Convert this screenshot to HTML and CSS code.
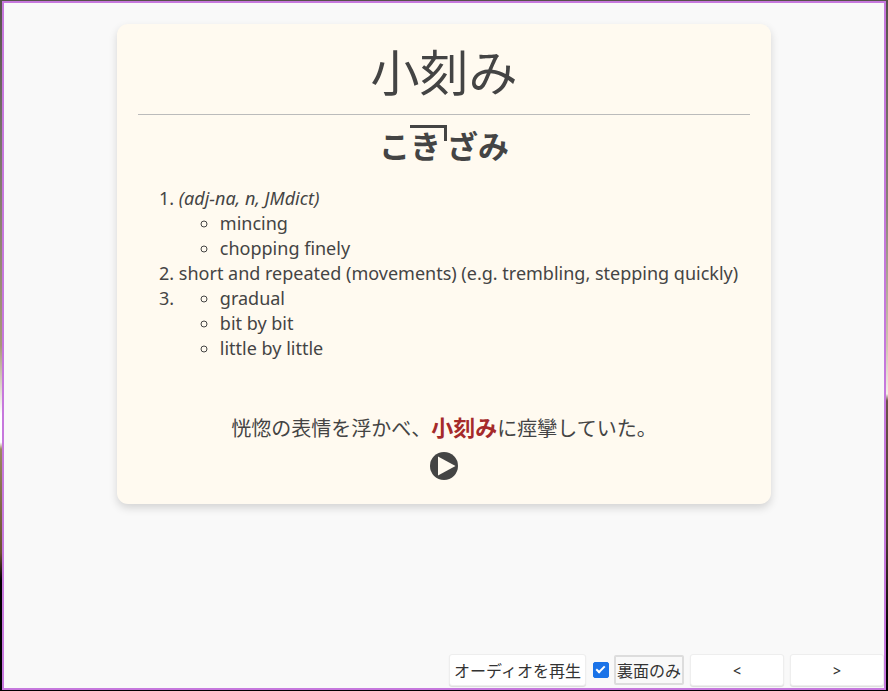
FILE: index.html
```html
<!DOCTYPE html>
<html lang="ja">
<head>
<meta charset="utf-8">
<title>小刻み</title>
<link rel="stylesheet" href="styles.css">
</head>
<body>
<div class="window">
  <main class="card">
    <h1 class="word">小刻み</h1>
    <hr class="rule">
    <p class="reading">こ<span class="high">き</span>ざみ</p>
    <ol class="senses" lang="en">
      <li><i>(adj-na, n, JMdict)</i>
        <ul><li>mincing</li><li>chopping finely</li></ul>
      </li>
      <li>short and repeated (movements) (e.g. trembling, stepping quickly)</li>
      <li>
        <ul><li>gradual</li><li>bit by bit</li><li>little by little</li></ul>
      </li>
    </ol>
    <p class="sentence">恍惚の表情を浮かべ、<b>小刻み</b>に痙攣していた。</p>
    <button class="play" type="button" aria-label="再生">
      <svg viewBox="0 0 28 28" width="28" height="28"><circle cx="14" cy="14" r="14"/><path d="M8 4.500v19L25.500 14z"/></svg>
    </button>
  </main>
  <footer class="bar">
    <button class="btn audio" type="button">オーディオを再生</button>
    <input class="check" type="checkbox" id="back" checked>
    <label class="check-label" for="back">裏面のみ</label>
    <button class="btn nav" type="button">&lt;</button>
    <button class="btn nav" type="button">&gt;</button>
  </footer>
</div>
</body>
</html>
```
FILE: styles.css
```css
*, *::before, *::after { box-sizing: border-box; }

body {
  margin: 0;
  min-height: 100vh;
  display: flex;
  padding: 1px 2px;
  background:
    linear-gradient(#55514a, #77736a 20%, #a89878 50%, #fff 60%, #fff 64%, #9a8860 65%, #6a5030 80%, #000 84%) left / 2px 100% no-repeat,
    linear-gradient(#55514a, #8a8078 30%, #d0c4b0 50%, #f4eee6 57%, #6a5248 58%, #4a3830 78%, #000 92%) right / 2px 100% no-repeat,
    linear-gradient(#55514a 50%, #000 50%);
  color: #444;
  font: 18px/25px "Noto Sans", "Noto Sans CJK JP", sans-serif;
}

.window {
  flex: 1;
  display: flex;
  flex-direction: column;
  align-items: center;
  border: 2px solid #c678dd;
  background: #f9f9f9;
}

.card {
  display: flex;
  flex-direction: column;
  margin-top: 21px;
  padding: 16px 21px 24px;
  border-radius: 11px;
  background: #fffaf0;
  box-shadow: 0 4px 8px rgba(0, 0, 0, 0.15);
}

.word {
  margin: 0;
  font: 400 49px/60px "Noto Sans CJK JP", sans-serif;
  text-align: center;
}

.rule {
  width: 100%;
  margin: 14px 0 9px;
  border: 0;
  border-top: 1px solid #bbb;
}

.reading {
  margin: 0 0 20px;
  font: 700 31px/42px "Noto Sans CJK JP", sans-serif;
  text-align: center;
}

.high {
  position: relative;
  margin-right: 6px;
}

.high::after {
  content: "";
  position: absolute;
  inset: 3px -6px auto 0;
  height: 16px;
  border: solid #444;
  border-width: 3px 3px 0 0;
}

.senses {
  margin: 0;
  padding: 0 12px 0 41px;
}

.senses ul {
  margin: 0;
  padding-left: 41px;
  list-style: circle;
}

.sentence {
  margin: 50px 0 9px;
  font: 20px/30px "Noto Sans CJK JP", sans-serif;
  text-align: center;
}

.sentence b {
  color: #a52a2a;
  font-size: 22px;
}

.play {
  align-self: center;
  width: 28px;
  height: 28px;
  padding: 0;
  border: 0;
  background: none;
}

.play svg { display: block; fill: #444; }
.play path { fill: #fffaf0; }

.bar {
  align-self: stretch;
  display: flex;
  justify-content: flex-end;
  align-items: center;
  margin-top: auto;
  padding-bottom: 2px;
}

.btn {
  height: 32px;
  padding: 0 4px;
  border: 1px solid #eee;
  border-radius: 3px;
  background: #fff;
  box-shadow: 0 1px 1px rgba(0, 0, 0, 0.12);
  color: #333;
  font: 16px "Noto Sans CJK JP", sans-serif;
}

.nav {
  width: 94px;
  margin-left: 6px;
  font: 500 14px "Noto Sans", sans-serif;
}

.check {
  appearance: none;
  display: grid;
  place-items: center;
  width: 16px;
  height: 16px;
  margin: 0 5px 0 7px;
  border: 1px solid #1a73e8;
  border-radius: 2px;
}

.check:checked { background: #1a73e8; }

.check:checked::before {
  content: "";
  width: 9px;
  height: 5px;
  margin-bottom: 3px;
  border: solid #fff;
  border-width: 0 0 2px 2px;
  rotate: -45deg;
}

.check-label {
  height: 30px;
  padding: 0 1px;
  border: 2px solid #ddd;
  border-radius: 2px;
  color: #333;
  font: 16px/26px "Noto Sans CJK JP", sans-serif;
}
```
